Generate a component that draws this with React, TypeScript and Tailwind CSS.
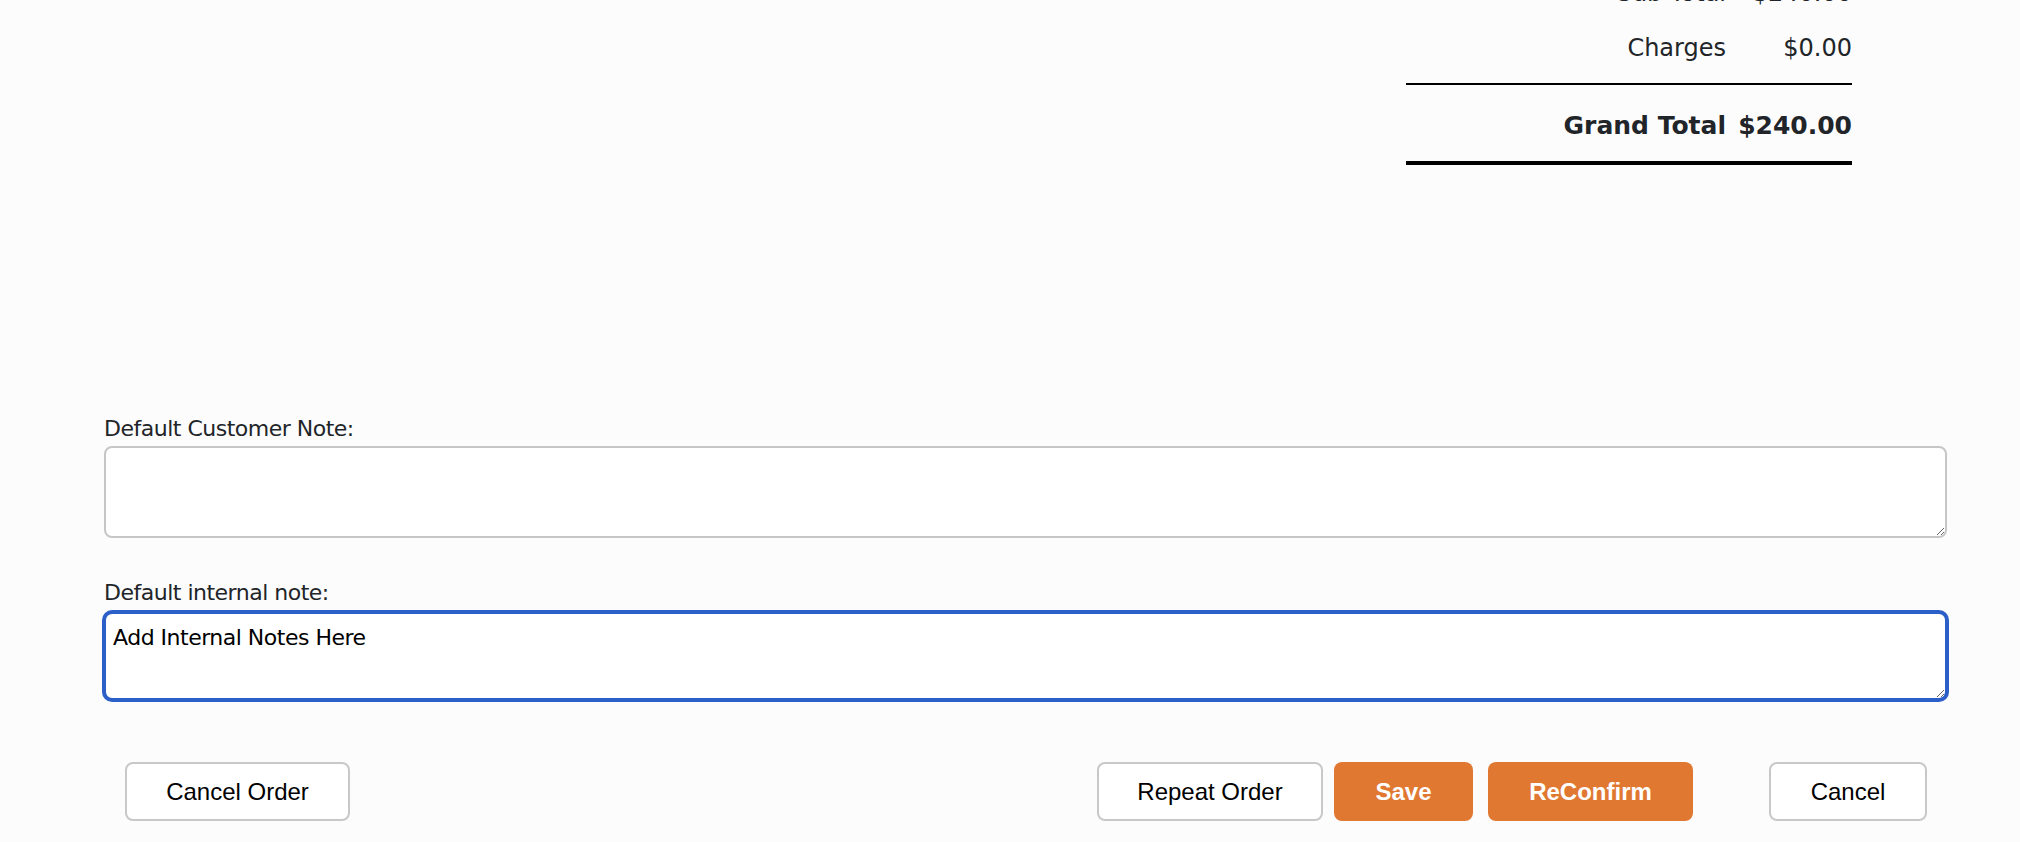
import React from "react";

const note = "font-['DejaVu_Sans',sans-serif] text-[22px] tracking-[-0.5px] leading-[26px] text-[#212529]";
const btn =
  "h-[59px] rounded-[8px] font-['Liberation_Sans',Arial,sans-serif] text-[24px] flex items-center justify-center";
const plainBtn = "border-2 border-[#c8c8c8] bg-white text-black";
const orangeBtn = "bg-[#e07832] text-white font-bold";

function TotalRow({ label, value, bold, className }: { label: string; value: string; bold?: boolean; className?: string }) {
  return (
    <div
      className={`flex h-[32px] leading-[32px] font-['DejaVu_Sans',sans-serif] text-[#212529] ${
        bold ? "font-bold text-[25px]" : "text-[24px]"
      } ${className ?? ""}`}
    >
      <div className="flex-1 text-right whitespace-nowrap">{label}</div>
      <div className="w-[126px] text-right whitespace-nowrap">{value}</div>
    </div>
  );
}

export default function App() {
  return (
    <div className="min-h-screen w-full bg-[#fcfcfc] overflow-hidden pl-[104px] pr-[73px]">
      <div className="flex justify-end pr-[95px]">
        <div className="w-[446px]">
          {/* row above is scrolled out of view */}
          <TotalRow label="Sub Total" value="$240.00" className="-mt-[23px]" />
          <TotalRow label="Charges" value="$0.00" className="mt-[23px]" />
          <div className="mt-[19px] h-[2px] bg-black" />
          <TotalRow label="Grand Total" value="$240.00" bold className="mt-[25px]" />
          <div className="mt-[19px] h-[4px] bg-black" />
        </div>
      </div>

      <div className="mt-[251px]">
        <label className={`block mb-[4px] ${note}`}>Default Customer Note:</label>
        <textarea
          className={`block w-full h-[92px] bg-white border-2 border-[#c6c6c6] rounded-[8px] pt-[10px] pl-[7px] outline-none ${note} text-black`}
        />

        <label className={`block mt-[42px] mb-[6px] ${note}`}>Default internal note:</label>
        <textarea
          defaultValue="Add Internal Notes Here"
          className={`block w-full h-[88px] bg-white border-2 border-[#2c5fc8] ring-2 ring-[#2c5fc8] rounded-[8px] pt-[11px] pl-[7px] outline-none ${note} text-black`}
        />
      </div>

      <div className="mt-[62px] flex items-center px-[21px] pr-[20px]">
        <button className={`${btn} ${plainBtn} w-[225px]`}>Cancel Order</button>
        <div className="flex-1" />
        <button className={`${btn} ${plainBtn} w-[226px]`}>Repeat Order</button>
        <button className={`${btn} ${orangeBtn} w-[139px] ml-[11px]`}>Save</button>
        <button className={`${btn} ${orangeBtn} w-[205px] ml-[15px]`}>ReConfirm</button>
        <button className={`${btn} ${plainBtn} w-[158px] ml-[76px]`}>Cancel</button>
      </div>
    </div>
  );
}
